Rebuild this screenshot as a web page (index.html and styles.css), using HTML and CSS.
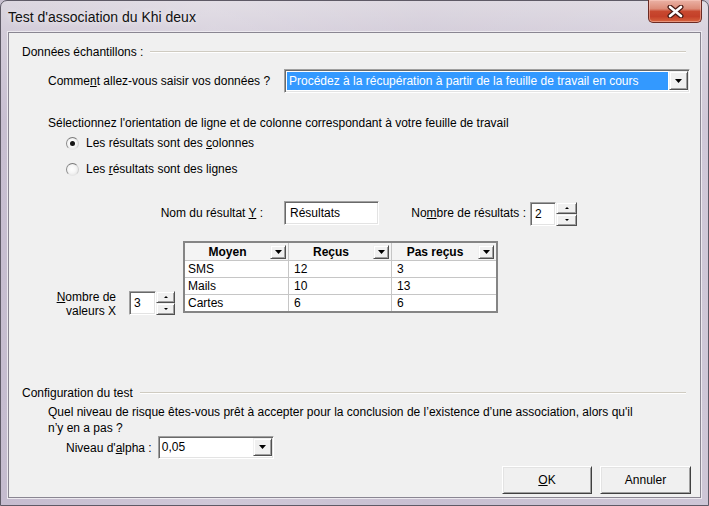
FILE: index.html
```html
<!DOCTYPE html>
<html lang="fr">
<head>
<meta charset="utf-8">
<title>Test d'association du Khi deux</title>
<link rel="stylesheet" href="styles.css">
</head>
<body>
<div class="window">
  <div class="titlebar">
    <span class="title">Test d'association du Khi deux</span>
    <button class="close" aria-label="Fermer">
      <svg width="17" height="13" viewBox="0 0 17 13"><path d="M3 2 L14 11 M14 2 L3 11" stroke="#4a1a14" stroke-width="5" stroke-linecap="round" fill="none"/><path d="M3 2 L14 11 M14 2 L3 11" stroke="#ffffff" stroke-width="2.6" stroke-linecap="round" fill="none"/></svg>
    </button>
  </div>
  <div class="client">
    <div class="group-head"><span>Données échantillons :</span><span class="rule"></span></div>
    <div class="method-row">
      <span class="lbl">Comme<u>n</u>t allez-vous saisir vos données ?</span>
      <div class="combo combo-method">
        <span class="combo-value selected">Procédez à la récupération à partir de la feuille de travail en cours</span>
        <span class="drop-btn"><svg width="7" height="4" viewBox="0 0 7 4"><polygon points="0,0 7,0 3.5,4" fill="#000"/></svg></span>
      </div>
    </div>
    <p class="orient">Sélectionnez l'orientation de ligne et de colonne correspondant à votre feuille de travail</p>
    <div class="radio-list">
      <div class="radio-row"><span class="radio checked"></span><span>Les résultats sont des <u>c</u>olonnes</span></div>
      <div class="radio-row"><span class="radio"></span><span>Les <u>r</u>ésultats sont des lignes</span></div>
    </div>
    <div class="result-row">
      <span class="lbl lbl-y">Nom du résultat <u>Y</u> :</span>
      <div class="textbox tb-name">Résultats</div>
      <span class="lbl lbl-count">No<u>m</u>bre de résultats :</span>
      <div class="spinner spinner-count">
        <div class="textbox tb-spin">2</div>
        <div class="spin-btns"><span class="spin-btn up"></span><span class="spin-btn down"></span></div>
      </div>
    </div>
    <div class="data-row">
      <span class="lbl lbl-x"><u>N</u>ombre de<br>valeurs X</span>
      <div class="spinner spinner-x">
        <div class="textbox tb-spin-x">3</div>
        <div class="spin-btns"><span class="spin-btn up"></span><span class="spin-btn down"></span></div>
      </div>
      <div class="grid">
        <div class="hcell"><span class="htext">Moyen</span><span class="hbtn"><svg width="7" height="4" viewBox="0 0 7 4"><polygon points="0,0 7,0 3.5,4" fill="#000"/></svg></span></div>
        <div class="hcell"><span class="htext">Reçus</span><span class="hbtn"><svg width="7" height="4" viewBox="0 0 7 4"><polygon points="0,0 7,0 3.5,4" fill="#000"/></svg></span></div>
        <div class="hcell"><span class="htext">Pas reçus</span><span class="hbtn"><svg width="7" height="4" viewBox="0 0 7 4"><polygon points="0,0 7,0 3.5,4" fill="#000"/></svg></span></div>
        <div class="cell first">SMS</div><div class="cell">12</div><div class="cell">3</div>
        <div class="cell first">Mails</div><div class="cell">10</div><div class="cell">13</div>
        <div class="cell first">Cartes</div><div class="cell">6</div><div class="cell">6</div>
      </div>
    </div>
    <div class="group-head config"><span>Configuration du test</span><span class="rule"></span></div>
    <p class="question">Quel niveau de risque êtes-vous prêt à accepter pour la conclusion de l’existence d’une association, alors qu'il<br>n’y en a pas ?</p>
    <div class="alpha-row">
      <span class="lbl">Niveau d'<u>a</u>lpha :</span>
      <div class="combo combo-alpha">
        <span class="combo-value">0,05</span>
        <span class="drop-btn"><svg width="7" height="4" viewBox="0 0 7 4"><polygon points="0,0 7,0 3.5,4" fill="#000"/></svg></span>
      </div>
    </div>
    <div class="buttons">
      <button class="btn"><u>O</u>K</button>
      <button class="btn">Annuler</button>
    </div>
  </div>
</div>
</body>
</html>
```

FILE: styles.css
```css
* { box-sizing: border-box; }
html, body { margin: 0; padding: 0; }
body {
  width: 709px;
  height: 506px;
  overflow: hidden;
  background: #c7bfcf;
  font-family: "Liberation Sans", Arial, sans-serif;
  font-size: 12px;
  color: #000;
}
u { text-decoration: underline; text-underline-offset: 1px; }
p { margin: 0; }

.window {
  width: 709px;
  height: 506px;
  display: flex;
  flex-direction: column;
  border: 1px solid #5e5a66;
  border-radius: 7px 7px 0 0;
  padding: 0 7px 7px;
  background:
    linear-gradient(90deg, rgba(255,255,255,0.0) 0, rgba(255,255,255,0.18) 30%, rgba(255,255,255,0.05) 60%, rgba(255,255,255,0.15) 100%),
    linear-gradient(180deg, #dcd7e0 0, #d3ccd9 30px, #c8bfd1 120px, #c5bccf 100%);
}

.titlebar {
  height: 31px;
  display: flex;
  align-items: flex-start;
  justify-content: space-between;
}
.title {
  margin-top: 8px;
  font-size: 14px;
  line-height: 17px;
  color: #111;
  text-shadow: 0 0 6px rgba(255,255,255,0.9);
}
.close {
  width: 54px;
  height: 23px;
  margin: -1px -1px 0 0;
  padding: 0;
  border: 1px solid #6b2a23;
  border-top: none;
  border-radius: 0 0 5px 5px;
  background: linear-gradient(180deg, #ebb2a5 0%, #dc8b78 40%, #c8482f 52%, #c44029 75%, #d8653f 100%);
  box-shadow: inset 0 0 0 1px rgba(255,210,200,0.45);
  display: flex;
  align-items: center;
  justify-content: center;
}

.client {
  flex: 1;
  background: #f0f0f0;
  border: 1px solid #8a8692;
  box-shadow: 0 0 0 1px #ece9ef;
  padding: 0 9px 0 13px;
  display: flex;
  flex-direction: column;
}

.group-head {
  margin-top: 11px;
  height: 16px;
  line-height: 16px;
  display: flex;
  align-items: center;
  white-space: nowrap;
}
.group-head .rule {
  flex: 1;
  height: 2px;
  margin: 0 5px 0 7px;
  border-top: 1px solid #cfcbc1;
  border-bottom: 1px solid #ffffff;
}
.group-head.config { margin-top: 67px; }

.lbl { white-space: nowrap; }

.method-row {
  margin: 9px 1px 0 26px;
  height: 24px;
  display: flex;
  align-items: center;
}

/* combo box / textbox sunken borders */
.combo, .textbox {
  background: #fff;
  border: 1px solid;
  border-color: #a0a0a0 #ffffff #ffffff #a0a0a0;
  box-shadow: inset 1px 1px 0 #696969, inset -1px -1px 0 #e3e3e3;
}
.combo {
  display: flex;
  align-items: stretch;
  padding: 1px 1px 2px 2px;
}
.combo-method {
  margin-left: auto;
  width: 406px;
  height: 24px;
}
.combo-value {
  flex: 1;
  line-height: 19px;
  padding-left: 2px;
  white-space: nowrap;
  overflow: hidden;
}
.combo-value.selected {
  background: #3399ff;
  color: #fff;
  margin: 1px 1px 0 0;
  line-height: 18px;
}
.drop-btn {
  width: 19px;
  background: #f0f0f0;
  border: 1px solid;
  border-color: #f0f0f0 #505050 #505050 #f0f0f0;
  box-shadow: inset 1px 1px 0 #ffffff, inset -1px -1px 0 #a0a0a0;
  display: flex;
  align-items: center;
  justify-content: center;
}
.drop-btn svg { display: block; }

.orient {
  margin: 22px 0 0 26px;
  line-height: 16px;
}

.radio-list {
  margin: 2px 0 0 44px;
  display: flex;
  flex-direction: column;
  gap: 6px;
}
.radio-row {
  height: 20px;
  display: flex;
  align-items: center;
  gap: 7px;
}
.radio {
  width: 13px;
  height: 13px;
  border-radius: 50%;
  border: 1px solid;
  border-color: #7a7a7a #cfcfcf #e6e6e6 #8a8a8a;
  background: radial-gradient(circle at 45% 45%, #ffffff 0, #f6f6f6 45%, #dcdcdc 100%);
  position: relative;
}
.radio.checked::after {
  content: "";
  position: absolute;
  left: 3px;
  top: 3px;
  width: 5px;
  height: 5px;
  border-radius: 50%;
  background: #151515;
}

.result-row {
  margin: 22px 0 0 118px;
  height: 24px;
  display: flex;
  align-items: center;
}
.lbl-y { width: 123px; text-align: right; }
.textbox {
  height: 24px;
  line-height: 20px;
  padding: 1px 0 0 5px;
  white-space: nowrap;
}
.tb-name { width: 95px; margin-left: 21px; }
.lbl-count { width: 147px; text-align: right; }

.spinner { display: flex; height: 24px; }
.spinner-count { margin-left: 4px; margin-top: 2px; }
.tb-spin { width: 26px; padding-left: 4px; }
.tb-spin-x { width: 27px; padding-left: 4px; }
.spin-btns {
  width: 21px;
  display: flex;
  flex-direction: column;
}
.spinner-x .spin-btns { width: 19px; }
.spin-btn {
  flex: 1;
  background: #f0f0f0;
  border: 1px solid;
  border-color: #f0f0f0 #505050 #505050 #f0f0f0;
  box-shadow: inset 1px 1px 0 #ffffff, inset -1px -1px 0 #a0a0a0;
  display: flex;
  align-items: center;
  justify-content: center;
}
.spin-btn::before {
  content: "";
  width: 0;
  height: 0;
  border-left: 2px solid transparent;
  border-right: 2px solid transparent;
}
.spin-btn.up::before { border-bottom: 2px solid #000; }
.spin-btn.down::before { border-top: 2px solid #000; }

.data-row {
  margin-top: 16px;
  display: flex;
  align-items: flex-start;
}
.lbl-x {
  margin: 49px 0 0 18px;
  width: 76px;
  text-align: right;
  line-height: 14px;
}
.spinner-x { margin: 50px 0 0 13px; }

.grid {
  margin-left: 8px;
  width: 315px;
  height: 72px;
  display: grid;
  grid-template-columns: 103px 102px 104px;
  grid-template-rows: 17px 16px 16px 16px;
  gap: 1px;
  background: #c6c6c6;
  border: 2px solid #858585;
}
.hcell {
  background: #f4f4f4;
  display: flex;
  align-items: center;
  padding: 0 2px 0 0;
}
.htext {
  flex: 1;
  text-align: center;
  font-weight: bold;
  line-height: 16px;
}
.hbtn {
  width: 16px;
  height: 14px;
  background: #f0f0f0;
  border: 1px solid;
  border-color: #f0f0f0 #505050 #505050 #f0f0f0;
  box-shadow: inset 1px 1px 0 #ffffff, inset -1px -1px 0 #a0a0a0;
  display: flex;
  align-items: center;
  justify-content: center;
}
.cell {
  background: #fff;
  line-height: 16px;
  padding-left: 5px;
}
.cell.first { padding-left: 3px; }

.question {
  margin: 3px 0 0 26px;
  line-height: 16px;
}

.alpha-row {
  margin: 0 0 0 44px;
  height: 23px;
  display: flex;
  align-items: center;
}
.combo-alpha {
  margin-left: 6px;
  width: 116px;
  height: 23px;
}
.combo-alpha .combo-value { padding-left: 1px; line-height: 18px; }

.buttons {
  margin-top: 7px;
  display: flex;
  justify-content: flex-end;
  gap: 8px;
}
.btn {
  width: 90px;
  height: 28px;
  padding: 0;
  font: inherit;
  color: #000;
  background: #f0f0f0;
  border: 1px solid;
  border-color: #ffffff #404040 #404040 #ffffff;
  box-shadow: inset 1px 1px 0 #e3e3e3, inset -1px -1px 0 #a0a0a0;
}
.btn + .btn { width: 91px; }
```
